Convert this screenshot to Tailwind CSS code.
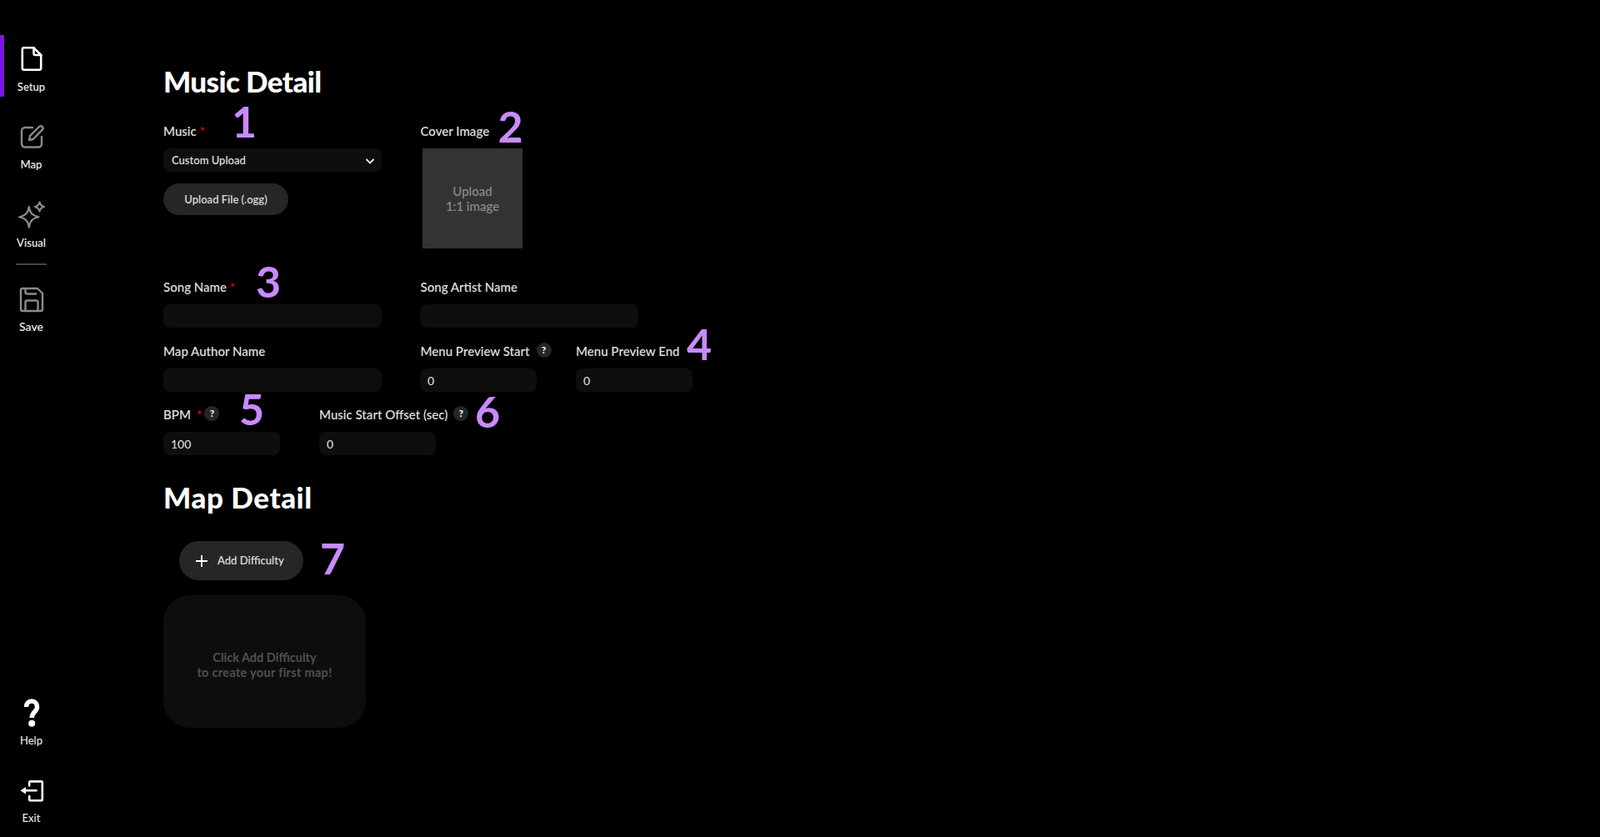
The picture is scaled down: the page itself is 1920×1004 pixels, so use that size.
<!DOCTYPE html>
<html lang="en">
<head>
    <meta charset="UTF-8">
    <meta name="viewport" content="width=device-width, initial-scale=1.0">
    <title>Music Detail</title>
    <script src="https://cdn.jsdelivr.net/npm/@tailwindcss/browser@4"></script>
</head>
<body class="bg-black min-h-screen font-['Lato',sans-serif] text-[#dcdcdc]">
<div class="flex h-[1004px] overflow-hidden">
    <!-- Sidebar -->
    <nav class="w-[75px] shrink-0 h-full flex flex-col justify-between pt-[42px] pb-[2px] text-[13px] font-semibold">
        <div class="flex flex-col">
            <a class="relative h-[74px] flex flex-col items-center pt-[8px] mb-[19px] text-[#e5e5e5]">
                <span class="absolute left-0 top-0 h-full w-[5px] bg-[#7b16e6]"></span>
                <svg class="w-[40px] h-[40px]" viewBox="0 0 40 40" fill="none" stroke="#fff" stroke-width="2.6" stroke-linejoin="round" stroke-linecap="round"><path d="M10.800 7.300h11.700l8.700 8.700v15.700a2 2 0 0 1-2 2H10.800a2 2 0 0 1-2-2V9.300a2 2 0 0 1 2-2z"/><path d="M22.500 7.300v6.700a2 2 0 0 0 2 2h6.700"/></svg>
                <span class="mt-[6px] leading-[16px]">Setup</span>
            </a>
            <a class="h-[74px] flex flex-col items-center pt-[9px] mb-[20px] text-[#e5e5e5]">
                <svg class="w-[40px] h-[40px]" viewBox="0 0 40 40" fill="none" stroke="#8a8a8a" stroke-width="2.4" stroke-linejoin="round" stroke-linecap="round"><path d="M21 9h-9a4 4 0 0 0-4 4v15.500a4 4 0 0 0 4 4h16a4 4 0 0 0 4-4V20"/><path d="M17 24l1-5 11-11a2.600 2.600 0 0 1 3.700 3.700L21.700 23z"/></svg>
                <span class="mt-[5px] leading-[16px]">Map</span>
            </a>
            <a class="h-[74px] flex flex-col items-center pt-[9px] text-[#e5e5e5]">
                <svg class="w-[40px] h-[40px]" viewBox="0 0 40 40" fill="none" stroke="#8a8a8a" stroke-width="2.2" stroke-linejoin="round"><path d="M16.800 10c1 7.500 4 10.500 11.700 12.300c-7.700 1.800-10.700 4.800-11.700 12.400c-1-7.600-4-10.600-11.600-12.400c7.600-1.800 10.600-4.800 11.600-12.300z"/><path d="M29.500 4.500c.6 3 2 4.500 5.500 5.500c-3.500 1-4.900 2.500-5.500 5.500c-.6-3-2-4.500-5.500-5.500c3.500-1 4.900-2.500 5.500-5.500z"/></svg>
                <span class="mt-[5px] leading-[16px]">Visual</span>
            </a>
            <div class="mx-[19px] mt-[13px] mb-[21px] h-[2px] bg-[#444]"></div>
            <a class="flex flex-col items-center text-[#e5e5e5]">
                <svg class="w-[40px] h-[40px]" viewBox="0 0 40 40" fill="none" stroke="#8a8a8a" stroke-width="2.4" stroke-linejoin="round"><path d="M7 9a2 2 0 0 1 2-2h18l6 6v19a2 2 0 0 1-2 2H9a2 2 0 0 1-2-2z"/><path d="M12.500 7v4.500a2 2 0 0 0 2 2H26"/><path d="M12.500 34V23.500a2 2 0 0 1 2-2h11a2 2 0 0 1 2 2V34"/></svg>
                <span class="mt-[5px] leading-[16px] text-[14px]">Save</span>
            </a>
        </div>
        <div class="flex flex-col">
            <a class="h-[74px] flex flex-col items-center mb-[19px] text-[#e5e5e5] font-medium">
                <svg class="w-[40px] h-[40px]" viewBox="0 0 40 40" fill="none" stroke="#fff" stroke-width="5.500"><path d="M13.500 13c0-9.500 13-9.500 13 0c0 6-6.300 6-6.300 13"/><circle cx="20.200" cy="32.700" r="4" fill="#fff" stroke="none"/></svg>
                <span class="leading-[16px] mt-[5px]">Help</span>
            </a>
            <a class="h-[74px] flex flex-col items-center text-[#e5e5e5] font-medium">
                <svg class="w-[40px] h-[40px]" viewBox="0 0 40 40" fill="none" stroke="#fff" stroke-width="2.600" stroke-linejoin="round" stroke-linecap="round"><path d="M17.200 14.500V10.900a1.500 1.500 0 0 1 1.500-1.500h12.600a1.500 1.500 0 0 1 1.500 1.500v19.900a1.500 1.500 0 0 1-1.500 1.500H18.700a1.500 1.500 0 0 1-1.500-1.500V27"/><path d="M12 20.300h13.500"/><path d="M6.500 20.300L13 16v8.600z" fill="#fff" stroke="none"/></svg>
                <span class="leading-[16px] mt-[5px]">Exit</span>
            </a>
        </div>
    </nav>

    <!-- Main Content -->
    <main class="pl-[121px] pt-[74px]">
        <h1 class="text-[35px] leading-[46px] font-black text-white tracking-[-0.6px]">Music Detail</h1>

        <div class="flex gap-[46px] mt-[25px]">
            <div class="w-[262px]">
                <label class="relative block h-[24px] text-[15px] leading-[24px] font-semibold">Music <span class="font-bold text-[#d00000]">*</span>
                    <span class="absolute left-[82px] top-[-30px] text-[52px] leading-[60px] font-bold text-[#c88bff]">1</span>
                </label>
                <div class="mt-[9px] h-[28px] rounded-[8px] bg-[#0e0e0e] flex items-center justify-between pl-[10px] pr-[7px] pt-[1px] text-[13px] font-semibold">
                    <span>Custom Upload</span>
                    <svg class="w-[14px] h-[14px]" viewBox="0 0 14 14" fill="none" stroke="#fff" stroke-width="1.800"><path d="M2.500 5l4.500 4.500L11.500 5"/></svg>
                </div>
                <button class="block mt-[14px] w-[150px] h-[38px] pt-[1px] rounded-full bg-[#262626] text-[13px] font-semibold">Upload File (.ogg)</button>
            </div>
            <div>
                <label class="relative block h-[24px] ml-[0.500px] text-[15px] leading-[24px] font-semibold">Cover Image
                    <span class="absolute left-[93px] top-[-24px] text-[52px] leading-[60px] font-bold text-[#c88bff]">2</span>
                </label>
                <div class="mt-[9px] ml-[3px] w-[120px] h-[120px] bg-[#333] flex items-center justify-center text-center text-[15px] leading-[18px] font-medium text-[#8c8c8c]">Upload<br>1:1 image</div>
            </div>
        </div>

        <div class="flex gap-[46px] mt-[34px]">
            <div class="w-[262px]">
                <label class="relative block h-[24px] text-[15px] leading-[24px] font-semibold">Song Name <span class="font-bold text-[#d00000]">*</span>
                    <span class="absolute left-[111px] top-[-25px] text-[52px] leading-[60px] font-bold text-[#c88bff]">3</span>
                </label>
                <input class="block mt-[9px] w-full h-[28px] rounded-[8px] bg-[#0e0e0e]">
            </div>
            <div class="w-[262px]">
                <label class="block h-[24px] ml-[0.500px] text-[15px] leading-[24px] font-semibold">Song Artist Name</label>
                <input class="block mt-[9px] w-full h-[28px] rounded-[8px] bg-[#0e0e0e]">
            </div>
        </div>

        <div class="flex mt-[16px]">
            <div class="w-[262px] mr-[46px]">
                <label class="block h-[24px] text-[15px] leading-[24px] font-semibold">Map Author Name</label>
                <input class="block mt-[9px] w-full h-[28px] rounded-[8px] bg-[#0e0e0e]">
            </div>
            <div class="w-[140px] mr-[47px]">
                <label class="flex items-center h-[24px] ml-[0.500px] text-[15px] leading-[24px] font-semibold whitespace-nowrap">Menu Preview Start
                    <span class="ml-[8px] mt-[-3px] w-[18px] h-[18px] rounded-full bg-[#262626] text-white text-[12px] font-bold flex items-center justify-center shrink-0">?</span>
                </label>
                <input value="0" class="block mt-[9px] w-full h-[28px] rounded-[8px] bg-[#0e0e0e] px-[9px] text-[14px] font-medium">
            </div>
            <div class="w-[140px]">
                <label class="relative block h-[24px] text-[15px] leading-[24px] font-semibold whitespace-nowrap">Menu Preview End
                    <span class="absolute left-[133px] top-[-27px] text-[52px] leading-[60px] font-bold text-[#c88bff]">4</span>
                </label>
                <input value="0" class="block mt-[9px] w-full h-[28px] rounded-[8px] bg-[#0e0e0e] px-[9px] text-[14px] font-medium">
            </div>
        </div>

        <div class="flex mt-[15px]">
            <div class="w-[140px] mr-[47px]">
                <label class="relative flex items-center h-[24px] text-[15px] leading-[24px] font-semibold whitespace-nowrap">BPM <span class="ml-[7px] font-bold text-[#d00000]">*</span>
                    <span class="ml-[3px] mt-[-3px] w-[18px] h-[18px] rounded-full bg-[#262626] text-white text-[12px] font-bold flex items-center justify-center shrink-0">?</span>
                    <span class="absolute left-[91px] top-[-25px] text-[52px] leading-[60px] font-bold text-[#c88bff]">5</span>
                </label>
                <input value="100" class="block mt-[9px] w-full h-[28px] rounded-[8px] bg-[#0e0e0e] px-[9px] text-[14px] font-medium">
            </div>
            <div class="w-[140px]">
                <label class="relative flex items-center h-[24px] text-[15px] leading-[24px] font-semibold whitespace-nowrap">Music Start Offset (sec)
                    <span class="ml-[7px] mt-[-3px] w-[18px] h-[18px] rounded-full bg-[#262626] text-white text-[12px] font-bold flex items-center justify-center shrink-0">?</span>
                    <span class="absolute left-[187px] top-[-22px] text-[52px] leading-[60px] font-bold text-[#c88bff]">6</span>
                </label>
                <input value="0" class="block mt-[9px] w-full h-[28px] rounded-[8px] bg-[#0e0e0e] px-[9px] text-[14px] font-medium">
            </div>
        </div>

        <h1 class="mt-[27px] text-[35px] leading-[46px] font-black text-white tracking-[0.55px]">Map Detail</h1>

        <div class="relative ml-[19px] mt-[30px] w-[149px]">
            <button class="w-full h-[47px] rounded-full bg-[#262626] flex items-center pl-[19px] text-[13px] font-semibold">
                <svg class="w-[16px] h-[16px] mr-[11px]" viewBox="0 0 16 16" fill="none" stroke="#fff" stroke-width="1.800"><path d="M8 1v14M1 8h14"/></svg>
                Add Difficulty
            </button>
            <span class="absolute left-[169px] top-[-10px] text-[52px] leading-[60px] font-bold text-[#c88bff]">7</span>
        </div>

        <div class="mt-[18px] w-[243px] h-[159px] pt-[8px] rounded-[32px] bg-[#0d0d0d] flex items-center justify-center text-center text-[14.5px] leading-[18px] font-bold text-[#505050]">
            <p>Click Add Difficulty<br><span class="tracking-[0.3px]">to create your first map!</span></p>
        </div>
    </main>
</div>
</body>
</html>
